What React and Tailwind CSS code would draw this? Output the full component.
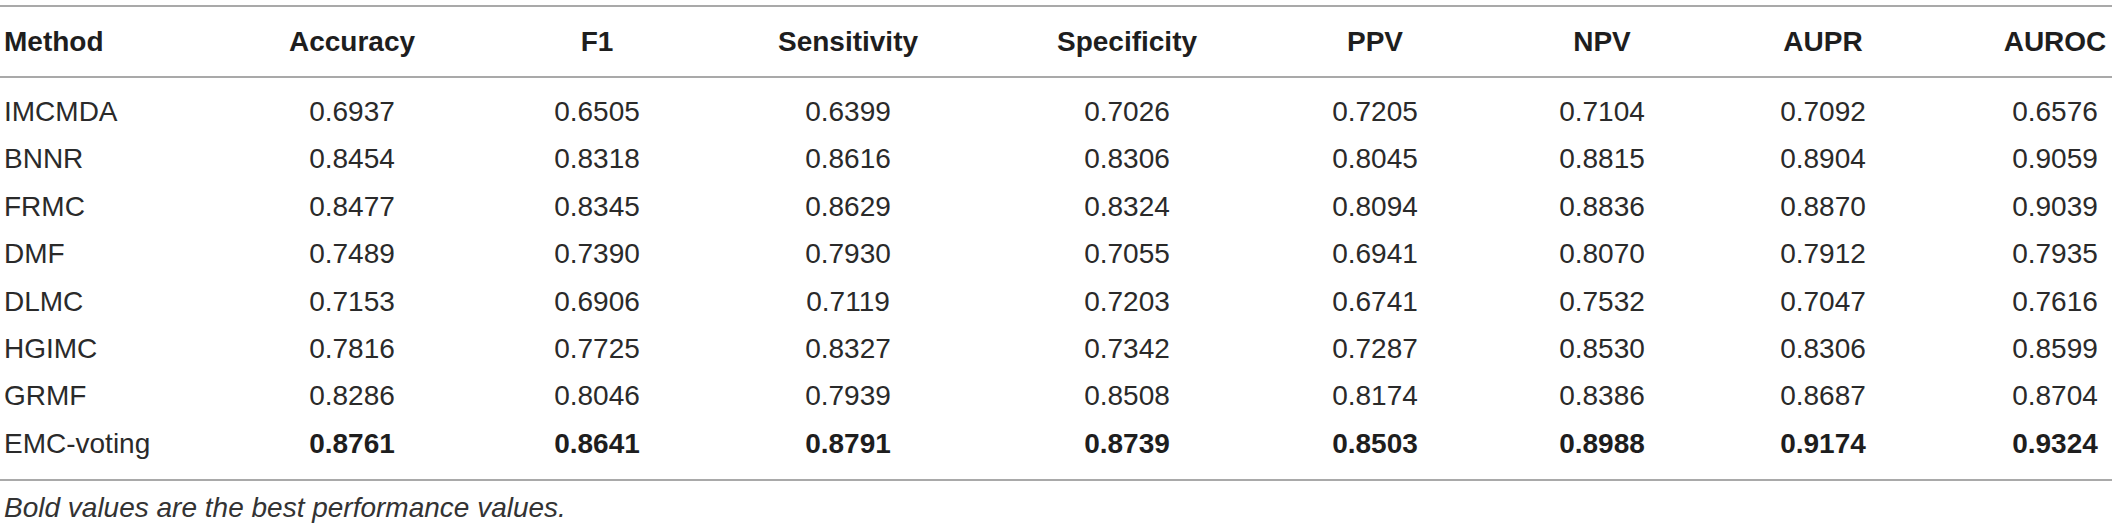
import React from "react";

const COLS =
  "grid grid-cols-[230px_244px_246px_256px_302px_194px_260px_182px_1fr] items-center";

const headers = ["Method", "Accuracy", "F1", "Sensitivity", "Specificity", "PPV", "NPV", "AUPR", "AUROC"];

const rows = [
  ["IMCMDA", "0.6937", "0.6505", "0.6399", "0.7026", "0.7205", "0.7104", "0.7092", "0.6576"],
  ["BNNR", "0.8454", "0.8318", "0.8616", "0.8306", "0.8045", "0.8815", "0.8904", "0.9059"],
  ["FRMC", "0.8477", "0.8345", "0.8629", "0.8324", "0.8094", "0.8836", "0.8870", "0.9039"],
  ["DMF", "0.7489", "0.7390", "0.7930", "0.7055", "0.6941", "0.8070", "0.7912", "0.7935"],
  ["DLMC", "0.7153", "0.6906", "0.7119", "0.7203", "0.6741", "0.7532", "0.7047", "0.7616"],
  ["HGIMC", "0.7816", "0.7725", "0.8327", "0.7342", "0.7287", "0.8530", "0.8306", "0.8599"],
  ["GRMF", "0.8286", "0.8046", "0.7939", "0.8508", "0.8174", "0.8386", "0.8687", "0.8704"],
  ["EMC-voting", "0.8761", "0.8641", "0.8791", "0.8739", "0.8503", "0.8988", "0.9174", "0.9324"],
];

function Cell({ i, children, bold }) {
  const base = bold ? "font-bold text-[#1e1e1e]" : "font-normal text-[#2a2a2a]";
  if (i === 0) return <div className={`pl-[4px] text-left whitespace-nowrap ${base}`}>{children}</div>;
  if (i === 8) return <div className={`pl-[84px] text-center whitespace-nowrap ${base}`}>{children}</div>;
  return <div className={`text-center whitespace-nowrap ${base}`}>{children}</div>;
}

export default function App() {
  return (
    <div className="bg-white w-[2117px] h-[528px] pt-[5px] text-[28px]" style={{ fontFamily: '"Liberation Sans", Arial, sans-serif' }}>
      <div className="w-[2112px]">
        <div className={`${COLS} border-t-2 border-b-2 border-[#a9a9a9] h-[73px]`}>
          {headers.map((h, i) => (
            <Cell key={h} i={i} bold>
              {h}
            </Cell>
          ))}
        </div>
        <div className="pt-[10px] pb-[12px] border-b-2 border-[#a9a9a9]">
          {rows.map((r, ri) => (
            <div key={r[0]} className={`${COLS} h-[47.375px] leading-[47.375px]`}>
              {r.map((v, i) => (
                <Cell key={i} i={i} bold={ri === rows.length - 1 && i > 0}>
                  {v}
                </Cell>
              ))}
            </div>
          ))}
        </div>
        <div className="mt-[11px] pl-[4px] italic leading-[32px] text-[28px] text-[#333333]">
          Bold values are the best performance values.
        </div>
      </div>
    </div>
  );
}
